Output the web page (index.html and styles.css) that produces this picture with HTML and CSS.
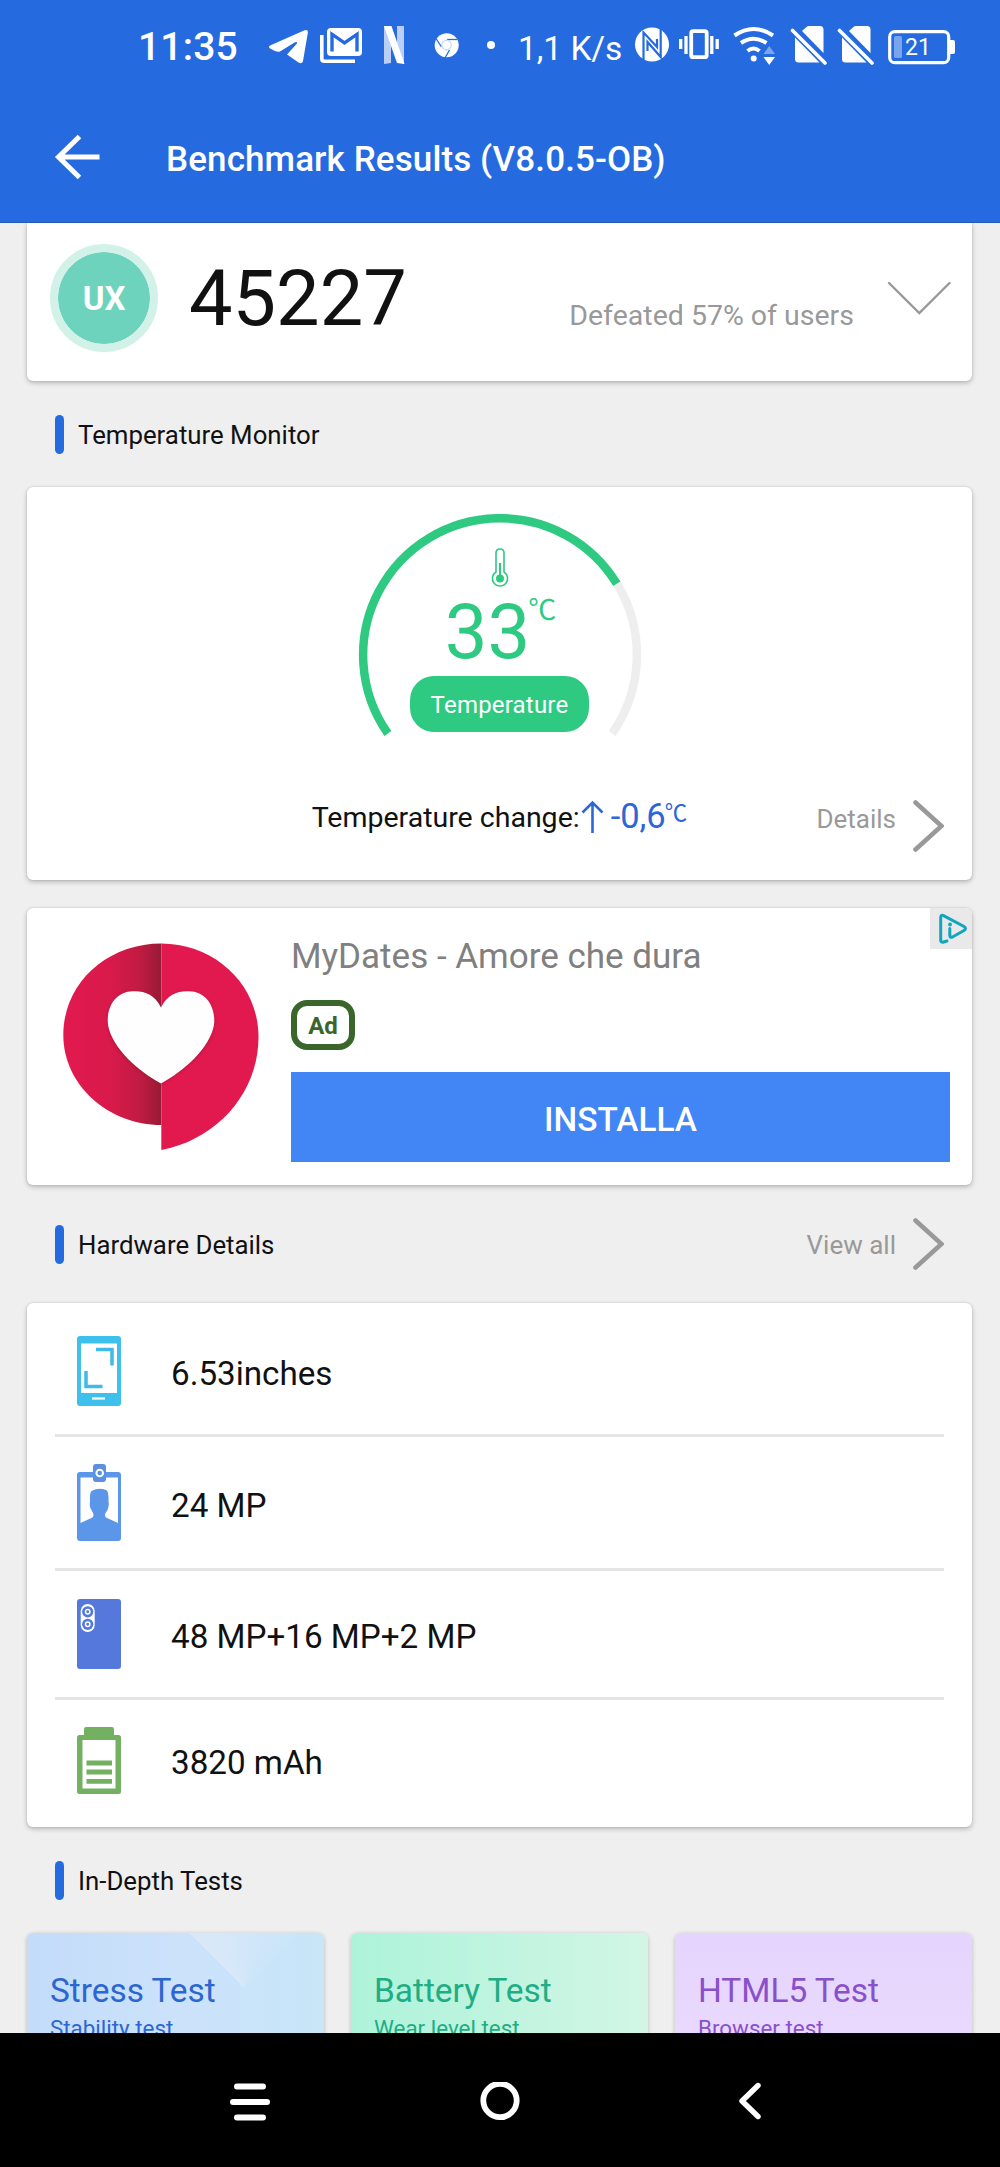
FILE: index.html
```html
<!DOCTYPE html>
<html lang="en">
<head>
<meta charset="utf-8">
<title>Benchmark Results</title>
<link rel="stylesheet" href="styles.css">
</head>
<body>
<header class="topbar">
  <div class="status">
    <span class="time">11:35</span>
    <svg class="st st-telegram" width="40" height="44" viewBox="268 24 40 44"><path d="M270 45.500L304 30.500Q308.500 29 307.800 33L303 61Q302 64.500 298.500 62.500L287 54.500L297 43.500Q297.500 41 294.500 42.500L280 51.500Q278 52.300 275 51L270 48.500Q268 47 270 45.500Z" fill="#fff"/></svg>
    <svg class="st st-mail" width="44" height="44" viewBox="319 24 44 44"><path d="M321.800 35V58.500Q321.800 61.300 324.500 61.300H355" fill="none" stroke="#fff" stroke-width="3.600"/><rect x="327" y="28" width="35" height="28" rx="4" fill="#fff"/><path d="M332 51.500V34L344.500 43L357 34V51.500" fill="none" stroke="#256bdf" stroke-width="3.400"/><path d="M329.500 30.500H359.500L344.500 40.500Z" fill="#fff"/></svg>
    <svg class="st st-netflix" width="24" height="44" viewBox="382 24 24 44"><path d="M384 26H391V63L384 64ZM397 26H404V64L397 62Z" fill="#b9cff5"/><path d="M384 26H391.500L404.500 64L397 63Z" fill="#fff"/></svg>
    <svg class="st st-chrome" width="28" height="44" viewBox="433 24 28 44"><circle cx="446.700" cy="45.300" r="12" fill="#fff"/><g stroke="#256bdf" stroke-width="1.300" fill="none"><path d="M447 39.500H457"/><path d="M441.500 47L436 38.500"/><path d="M449.500 50L445 58"/></g><circle cx="446.500" cy="45" r="4.800" fill="#fff" stroke="#c5d8f7" stroke-width="1.200"/></svg>
    <svg class="st st-dot" width="10" height="44" viewBox="486 24 10 44"><circle cx="491" cy="45" r="4" fill="#fff"/></svg>
    <span class="speed">1,1 K/s</span>
    <svg class="st st-nfc" width="36" height="44" viewBox="634 24 36 44"><circle cx="652" cy="44.500" r="17" fill="#fff"/><path d="M643.500 60V32.500L657 47V39M660.700 29V57L647.500 42V51" fill="none" stroke="#256bdf" stroke-width="2.200"/></svg>
    <svg class="st st-vibrate" width="42" height="44" viewBox="678 24 42 44"><rect x="691.200" y="31.200" width="15.500" height="26" rx="2" fill="none" stroke="#fff" stroke-width="3.800"/><path d="M680.700 39V49M686 36V54M711.800 36V54M717.200 39V49" stroke="#fff" stroke-width="3.300"/></svg>
    <svg class="st st-wifi" width="43" height="44" viewBox="733 24 43 44"><g fill="none" stroke="#fff" stroke-width="4"><path d="M734.500 35.500Q753.500 22.500 773 35.500"/><path d="M741 43Q753.500 34.500 766.500 43"/><path d="M747.500 51Q753.500 46 759.500 51"/></g><circle cx="753.700" cy="58.500" r="3" fill="#fff"/><path d="M763.500 54H775L769.200 46Z" fill="#7ba6ee"/><path d="M763.500 57H775L769.200 65Z" fill="#fff"/></svg>
    <svg class="st st-sim" width="38" height="44" viewBox="790 24 38 44"><path d="M802 31L806.500 27Q807.500 26 809 26H820Q823.500 26 823.500 29.500V53Z" fill="#fff"/><path d="M795 37.500L819.500 62.500H798.500Q795 62.500 795 59Z" fill="#fff"/><path d="M792.500 30.500L825 63" stroke="#fff" stroke-width="3.600" stroke-linecap="round"/></svg>
    <svg class="st st-sim" width="38" height="44" viewBox="790 24 38 44"><path d="M802 31L806.500 27Q807.500 26 809 26H820Q823.500 26 823.500 29.500V53Z" fill="#fff"/><path d="M795 37.500L819.500 62.500H798.500Q795 62.500 795 59Z" fill="#fff"/><path d="M792.500 30.500L825 63" stroke="#fff" stroke-width="3.600" stroke-linecap="round"/></svg>
    <svg class="st st-battery" width="70" height="44" viewBox="887 24 70 44"><rect x="889.700" y="31.700" width="59" height="31" rx="5" fill="none" stroke="#fff" stroke-width="3.200"/><rect x="894" y="36" width="8" height="22" rx="1.500" fill="#79a5ee"/><path d="M950 40H953Q955 40 955 42V52Q955 54 953 54H950Z" fill="#fff"/><text x="918" y="54.500" text-anchor="middle" class="battery-text">21</text></svg>
  </div>
  <div class="appbar">
    <svg width="46" height="46" viewBox="54 134 46 46"><path d="M58 157H99.500M79.500 136.500L58.500 157L79.500 177.500" fill="none" stroke="#fff" stroke-width="5"/></svg>
    <h1>Benchmark Results (V8.0.5-OB)</h1>
  </div>
</header>

<main class="content">
  <section class="card score">
    <div class="ux">UX</div>
    <div class="score-value">45227</div>
    <div class="score-note">Defeated 57% of users</div>
    <svg width="64" height="36" viewBox="0 0 64 36"><path d="M2 2L32.300 32L62.500 2" fill="none" stroke="#999" stroke-width="2.400" stroke-linecap="round"/></svg>
  </section>

  <div class="section-head temp-head"><i class="bar"></i><h2>Temperature Monitor</h2></div>

  <section class="card temp">
    <div class="gauge">
      <svg class="gauge-arc" width="286" height="230" viewBox="357 514 286 230"><path d="M616.800 583.500A136.800 136.800 0 0 1 612.100 733.500" fill="none" stroke="#eee" stroke-width="8.500"/><path d="M387.900 733.500A136.800 136.800 0 0 1 500 518.200A136.800 136.800 0 0 1 616.800 583.800" fill="none" stroke="#2fca82" stroke-width="8.500"/></svg>
      <svg class="thermo" width="18" height="40" viewBox="491 548 18 40"><path d="M496 572V553Q496 549 500 549T504 553V572A7.600 7.600 0 1 1 496 572Z" fill="none" stroke="#2fca82" stroke-width="1.600"/><path d="M500 563V575" stroke="#2fca82" stroke-width="2"/><circle cx="500" cy="578.500" r="4" fill="#2fca82"/></svg>
      <div class="gauge-value"><span>33</span><sup>℃</sup></div>
      <div class="pill">Temperature</div>
    </div>
    <div class="temp-row">
      <div class="change"><span class="label">Temperature change:</span><svg width="23" height="34" viewBox="0 0 23 34"><path d="M11.500 33V3M1.500 12.500L11.500 2.500L21.500 12.500" fill="none" stroke="#2c66d8" stroke-width="2.600"/></svg><span class="delta">-0,6</span><span class="unit">℃</span></div>
      <div class="more"><span>Details</span><svg width="31" height="52" viewBox="0 0 31 52"><path d="M2.500 2.500L28.500 26L2.500 49.500" fill="none" stroke="#999" stroke-width="4.600" stroke-linecap="round"/></svg></div>
    </div>
  </section>

  <section class="card ad">
    <svg class="ad-logo" width="200" height="210" viewBox="61 941 200 210">
      <defs><linearGradient id="fold" x1="0" x2="1" y1="0" y2="0"><stop offset="0" stop-color="#e2194f"/><stop offset=".5" stop-color="#d81a4a"/><stop offset=".8" stop-color="#be1b41"/><stop offset="1" stop-color="#971b35"/></linearGradient>
      <filter id="soft" x="-20%" y="-20%" width="140%" height="140%"><feGaussianBlur stdDeviation="1.500"/></filter></defs>
      <path d="M161.300 943.500C107 943.500 63.300 983 63.300 1035C63.300 1085 108 1125 161.300 1125Z" fill="url(#fold)"/>
      <path d="M161.300 943.500C216 944 258.500 985 258.500 1037C258.500 1092 218 1139 161.300 1150Z" fill="#e2194f"/>
      <path d="M161 1008C154 993 140 990 130 992C115 994 106 1008 108 1026C112 1050 138 1072 161 1084C184 1072 210 1050 214 1026C216 1008 207 994 192 992C182 990 168 993 161 1008Z" fill="#8a1730" opacity=".55" filter="url(#soft)"/>
      <path d="M161 1007.500C154 993 142 990 130 991.500C115 993 106 1008 108 1025C112 1048 138 1071 161 1083.500C184 1071 210 1048 214 1025C216 1008 207 993 192 991.500C180 990 168 993 161 1007.500Z" fill="#fffefe"/>
    </svg>
    <div class="ad-body">
      <div class="ad-title">MyDates - Amore che dura</div>
      <div class="ad-badge">Ad</div>
      <div class="ad-button">INSTALLA</div>
    </div>
    <div class="ad-choices"><svg width="30" height="32" viewBox="0 0 30 32"><path d="M9 28L5 29.300Q2.700 29.300 2.700 27V4.500Q2.700 1.500 5.500 2.700L26 13.500Q29 15.500 26 17.500L14.500 24Q11.800 25 11.800 22.500V15.500" fill="none" stroke="#12a5c0" stroke-width="3" stroke-linecap="round"/><circle cx="12" cy="11.500" r="1.900" fill="#12a5c0"/></svg></div>
  </section>

  <div class="section-head hw-head"><i class="bar"></i><h2>Hardware Details</h2>
    <div class="more"><span>View all</span><svg width="31" height="52" viewBox="0 0 31 52"><path d="M2.500 2.500L28.500 26L2.500 49.500" fill="none" stroke="#999" stroke-width="4.600" stroke-linecap="round"/></svg></div>
  </div>

  <section class="card specs">
    <div class="spec spec-screen"><svg width="44" height="70" viewBox="0 0 44 70"><rect width="44" height="70" rx="3" fill="#3dc0ec"/><path d="M4 7.500H40V57H4Z" fill="#fff"/><path d="M19 13.500H35V29.500M9 35V50.500H25.500" fill="none" stroke="#3dbbe6" stroke-width="3.500"/><path d="M15 62.500H28" stroke="#fff" stroke-width="2.200"/></svg><span>6.53inches</span></div>
    <div class="spec spec-front"><svg width="44" height="77" viewBox="0 0 44 77"><rect y="8" width="44" height="69" rx="3" fill="#5b96e8"/><path d="M3.500 13.500H41V59L30 54Q27 52.500 28.500 49L30.500 46Q32.500 40 31.500 37.500Q32 27 29 26Q22 23 14.500 27Q12.500 29 13 37.500Q12 43 14.500 46L16 49Q17.500 52.500 14.500 54L3.500 59Z" fill="#fff"/><rect x="16" width="13" height="18" rx="3" fill="#5b8fdf"/><circle cx="22.700" cy="9" r="3.300" fill="none" stroke="#fff" stroke-width="2"/></svg><span>24 MP</span></div>
    <div class="spec spec-rear"><svg width="44" height="70" viewBox="0 0 44 70"><rect width="44" height="70" rx="3" fill="#5578dc"/><rect x="3.700" y="5" width="14" height="28" rx="7" fill="#fff"/><g fill="#5578dc"><circle cx="10.700" cy="12.800" r="5.600"/><circle cx="10.700" cy="25.300" r="5.600"/></g><g fill="none" stroke="#fff" stroke-width="1.500"><circle cx="10.700" cy="12.800" r="2.200"/><circle cx="10.700" cy="25.300" r="2.200"/></g></svg><span>48 MP+16 MP+2 MP</span></div>
    <div class="spec spec-battery"><svg width="44" height="67" viewBox="0 0 44 67"><rect x="7" width="30" height="14" rx="2" fill="#74b062"/><rect y="8" width="44" height="59" rx="2.500" fill="#74b062"/><path d="M5.500 13H38.500V61.500H5.500Z" fill="#fff"/><path d="M9.500 36H35M9.500 45H35M9.500 54.300H35" stroke="#74b062" stroke-width="4.800"/></svg><span>3820 mAh</span></div>
  </section>

  <div class="section-head tests-head"><i class="bar"></i><h2>In-Depth Tests</h2></div>

  <div class="tiles">
    <div class="tile tile-stress"><h3>Stress Test</h3><p>Stability test</p></div>
    <div class="tile tile-battery"><h3>Battery Test</h3><p>Wear level test</p></div>
    <div class="tile tile-html"><h3>HTML5 Test</h3><p>Browser test</p></div>
  </div>
</main>

<nav class="navbar">
  <svg width="40" height="40" viewBox="0 0 40 40"><path d="M7 4.500H33M3 20H37M7 35.500H33" stroke="#fff" stroke-width="6" stroke-linecap="round"/></svg>
  <svg width="40" height="40" viewBox="0 0 40 40"><circle cx="20" cy="18.500" r="16.700" fill="none" stroke="#fff" stroke-width="5.800"/></svg>
  <svg width="40" height="40" viewBox="0 0 40 40"><path d="M28 3.500L12 19L28 34.500" fill="none" stroke="#fff" stroke-width="5.400" stroke-linecap="round" stroke-linejoin="round"/></svg>
</nav>
</body>
</html>
```
FILE: styles.css
```css
* { box-sizing: border-box; }
body {
  margin: 0;
  width: 1000px;
  height: 2167px;
  overflow: hidden;
  display: flex;
  flex-direction: column;
  background: #efefef;
  color: #111;
  font-family: Roboto, "Noto Sans CJK SC", sans-serif;
}
h1, h2, h3, p { margin: 0; font-weight: 400; }
svg { display: block; flex: none; }
span { white-space: nowrap; }

/* Header */
.topbar {
  height: 223px;
  flex: none;
  background: #256bdf;
  border-bottom: 1px solid #2159bd;
  color: #fff;
}
.status { height: 92px; display: flex; align-items: center; padding-left: 138px; }
.time { width: 102px; font-size: 39px; font-weight: 500; letter-spacing: 0.2px; line-height: 46px; padding-top: 1px; }
.speed { width: 109px; margin-left: 22px; font-size: 33.4px; line-height: 40px; padding-top: 5px; }
.st-telegram { margin-left: 28px; }
.st-mail { margin-left: 11px; }
.st-netflix { margin-left: 19px; }
.st-chrome { margin-left: 27px; }
.st-dot { margin-left: 25px; }
.st-nfc { margin-left: 7px; }
.st-vibrate { margin-left: 8px; }
.st-wifi { margin-left: 13px; }
.st-sim { margin-left: 14px; }
.st-sim + .st-sim { margin-left: 9px; }
.st-battery { margin-left: 12px; }
.battery-text { font-size: 23px; fill: #fff; }
.appbar { height: 130px; display: flex; align-items: center; padding-left: 54px; }
.appbar h1 { margin-left: 66px; padding-top: 5px; font-size: 35px; font-weight: 500; line-height: 42px; letter-spacing: 0.1px; }

/* Shared blocks */
.content { flex: none; height: 1810px; overflow: hidden; }
.card {
  position: relative;
  margin: 0 28px 0 27px;
  background: #fff;
  border-radius: 6px;
  box-shadow: 0 2px 5px rgba(0, 0, 0, 0.24), 0 0 2px rgba(0, 0, 0, 0.14);
}
.section-head { display: flex; align-items: center; padding: 0 56px 0 55px; }
.temp-head { height: 106px; }
.hw-head { height: 118px; }
.tests-head { height: 106px; }
.bar { width: 9px; height: 39px; border-radius: 4.5px; background: #256bdf; }
.section-head h2 { margin-left: 14px; padding-top: 2px; font-size: 25.8px; line-height: 30px; }
.more { display: flex; align-items: center; gap: 17px; color: #999; font-size: 26px; line-height: 30px; }
.section-head .more { margin-left: auto; }
.section-head .more span { padding-top: 2px; }

/* Score */
.score { height: 158px; display: flex; align-items: flex-start; border-radius: 0 0 6px 6px; }
.ux {
  width: 108px; height: 108px; margin: 21px 0 0 23px;
  border: 8px solid #d1f1e9; border-radius: 50%;
  background: #6dd3bd; background-clip: padding-box;
  color: #fff; font-size: 33px; font-weight: 700; line-height: 94px; text-align: center;
}
.score-value { margin: 29px 0 0 31px; font-size: 77.5px; line-height: 94px; }
.score-note { margin: 75px 33px 0 auto; font-size: 28.5px; line-height: 36px; color: #999; }
.score svg { margin: 58px 21px 0 0; }

/* Temperature */
.temp { height: 393px; padding-top: 27px; }
.gauge { position: relative; height: 286px; display: flex; flex-direction: column; align-items: center; color: #2fca82; }
.gauge-arc { position: absolute; top: 0; left: 330px; }
.thermo { margin-top: 34px; }
.gauge-value { display: flex; height: 88px; margin-left: 2px; font-size: 76px; line-height: 88px; }
.gauge-value sup { font-size: 28px; line-height: 34px; margin: 6px 0 0 -2px; width: 28px; }
.pill {
  width: 179px; height: 56px; border-radius: 24px; background: #2fca82;
  color: #fff; font-size: 24px; line-height: 58px; text-align: center; letter-spacing: 0.2px;
}
.temp-row { display: grid; grid-template-columns: 1fr auto 1fr; align-items: start; padding-right: 28px; padding-left: 28px; }
.change { grid-column: 2; display: flex; }
.change .label { font-size: 28.5px; line-height: 36px; }
.change svg { margin-left: 1px; }
.delta { margin-left: 7px; font-size: 34.5px; line-height: 33px; color: #2c66d8; }
.unit { margin-left: -1px; font-size: 22.5px; line-height: 27px; color: #2c66d8; }
.temp .more { justify-self: end; }
.temp .more span { margin-top: -14px; }

/* Ad */
.ad { height: 277px; margin-top: 28px; display: flex; }
.ad-logo { margin: 33px 0 0 34px; }
.ad-body { margin-left: 30px; flex: 1; padding-right: 22px; }
.ad-title { margin-top: 29px; font-size: 35px; line-height: 40px; color: #808080; }
.ad-badge {
  width: 64px; height: 50px; margin-top: 23px; border: 6px solid #3a662b; border-radius: 16px;
  color: #3a662b; font-size: 24px; font-weight: 700; line-height: 41px; text-align: center;
}
.ad-button { height: 90px; margin-top: 22px; background: #4285f4; color: #fff; font-size: 33.4px; font-weight: 500; line-height: 95px; text-align: center; }
.ad-choices {
  position: absolute; top: 0; right: 0; width: 42px; height: 41px; padding: 5px 0 0 8px;
  background: #e9e9e9; border-radius: 0 6px 0 0;
}

/* Hardware */
.specs { height: 524px; padding: 0 28px; }
.spec { display: flex; align-items: center; padding-left: 22px; border-bottom: 3px solid #e5e5e5; }
.spec span { margin: 6px 0 0 50px; font-size: 33.2px; line-height: 40px; }
.spec-screen { height: 134px; padding-top: 5px; }
.spec-front { height: 134px; }
.spec-rear { height: 129px; }
.spec-battery { height: 127px; padding-bottom: 6px; border-bottom: 0; }
.spec-battery span { margin-top: 4px; }

/* Test tiles */
.tiles { display: grid; grid-template-columns: repeat(3, 1fr); gap: 27px; padding: 0 28px 0 27px; }
.tile { height: 160px; padding: 38px 0 0 23px; border-radius: 6px; box-shadow: 0 1px 4px rgba(0, 0, 0, 0.22); }
.tile h3 { font-size: 33.4px; line-height: 40px; }
.tile p { margin-top: 3px; font-size: 22.4px; line-height: 28px; }
.tile-stress {
  color: #2c66d0;
  background:
    conic-gradient(from -45deg at 217px 55px, rgba(225, 236, 248, 0.65) 0deg, rgba(225, 236, 248, 0.1) 88deg, transparent 90deg),
    linear-gradient(90deg, #c3dcfa, #cce2fb 50%, #c8e6f8);
}
.tile-battery { color: #20ad83; background: linear-gradient(90deg, #adf3da, #d2f6e5); }
.tile-html { color: #8950cb; background: linear-gradient(#e5d5fe, #ebdbfd); }

/* System navigation */
.navbar { flex: none; height: 134px; display: flex; padding: 49px 0 0 230px; gap: 210px; background: #000; }
```
